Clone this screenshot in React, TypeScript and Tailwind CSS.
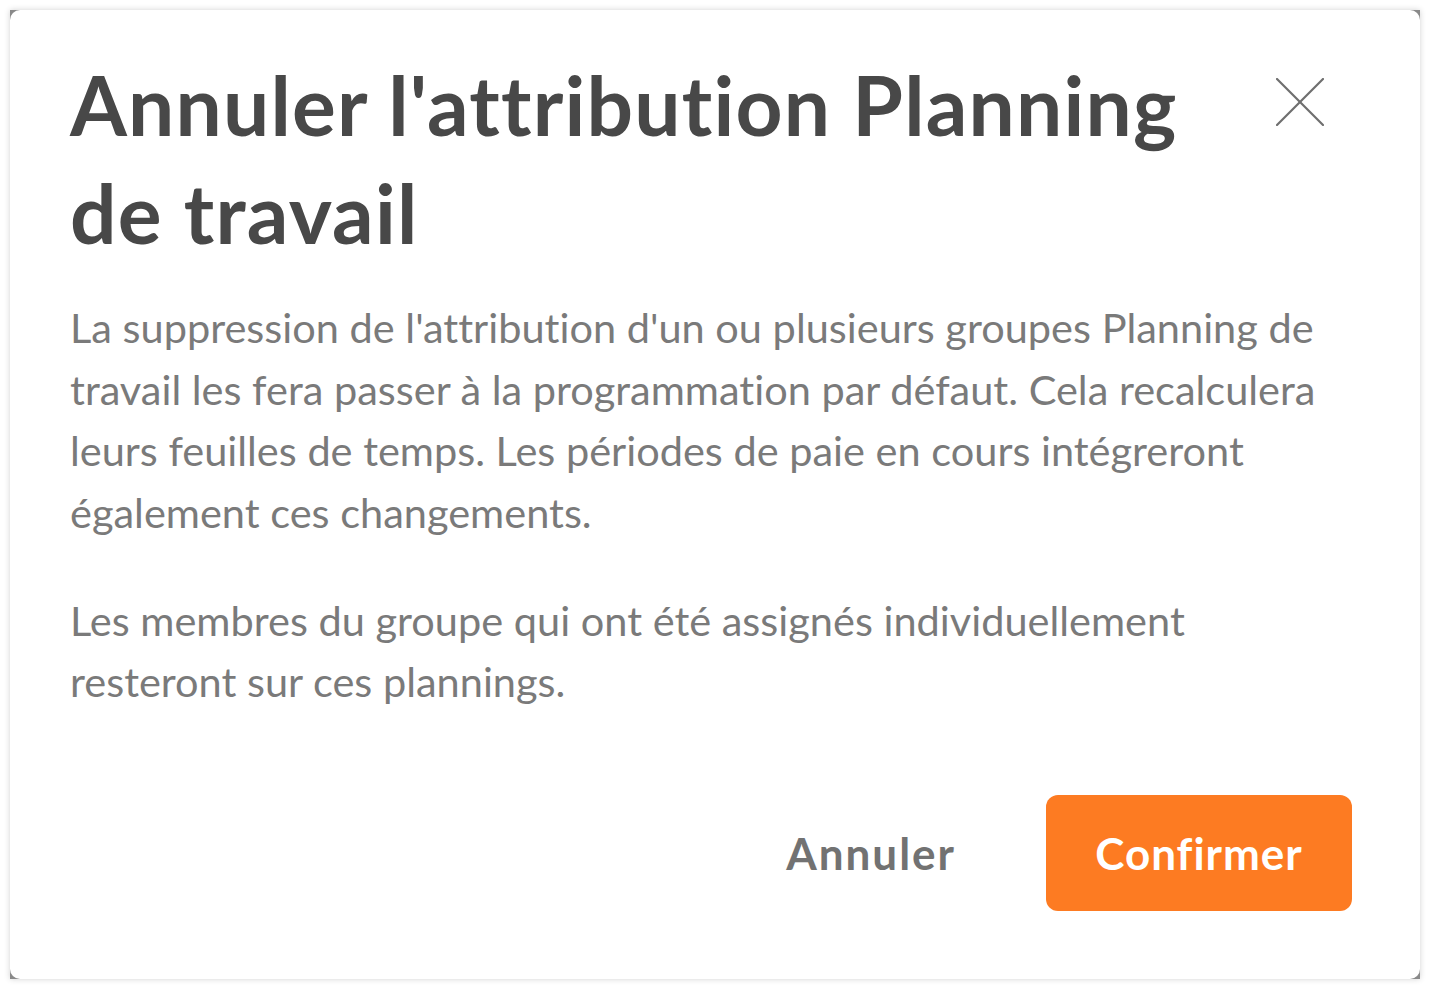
function CloseIcon() {
  return (
    <svg width="48" height="48" viewBox="0 0 48 48" fill="none" stroke="#6f6f6f" strokeWidth="2.2" strokeLinecap="round">
      <path d="M1 1L47 47" />
      <path d="M47 1L1 47" />
    </svg>
  );
}

export default function App() {
  return (
    <div
      className="min-h-screen bg-white p-[10px] [font-variant-ligatures:none]"
      style={{ fontFamily: "Lato, 'Noto Sans', sans-serif" }}
    >
      <div className="bg-[#8a8a8a] shadow-[0_0_6px_rgba(0,0,0,0.18)]">
        <div className="bg-white rounded-[10px] pt-[40px] pl-[60px] pr-[68px] pb-[68px]">
          <div className="flex items-start justify-between">
            <h2 className="text-[82px] leading-[108px] font-bold tracking-[1.2px] text-[#484848] whitespace-nowrap">
              Annuler l'attribution Planning
              <br />
              de travail
            </h2>
            <button className="mt-[20px] mr-[20px] w-[64px] h-[64px] flex items-center justify-center">
              <CloseIcon />
            </button>
          </div>

          <div className="mt-[31px] text-[41.5px] leading-[61.5px] text-[#7a7a7a] whitespace-nowrap">
            <p>
              La suppression de l'attribution d'un ou plusieurs groupes Planning de
              <br />
              travail les fera passer à la programmation par défaut. Cela recalculera
              <br />
              leurs feuilles de temps. Les périodes de paie en cours intégreront
              <br />
              également ces changements.
            </p>
            <p className="mt-[46.5px]">
              Les membres du groupe qui ont été assignés individuellement
              <br />
              resteront sur ces plannings.
            </p>
          </div>

          <div className="mt-[82px] flex justify-end items-center gap-[40px]">
            <button className="h-[116px] px-[50px] text-[44px] font-bold tracking-[2px] text-[#727272]">
              Annuler
            </button>
            <button className="h-[116px] w-[306px] rounded-[12px] bg-[#fd7b22] text-[44px] font-bold tracking-[1px] text-white">
              Confirmer
            </button>
          </div>
        </div>
      </div>
    </div>
  );
}
